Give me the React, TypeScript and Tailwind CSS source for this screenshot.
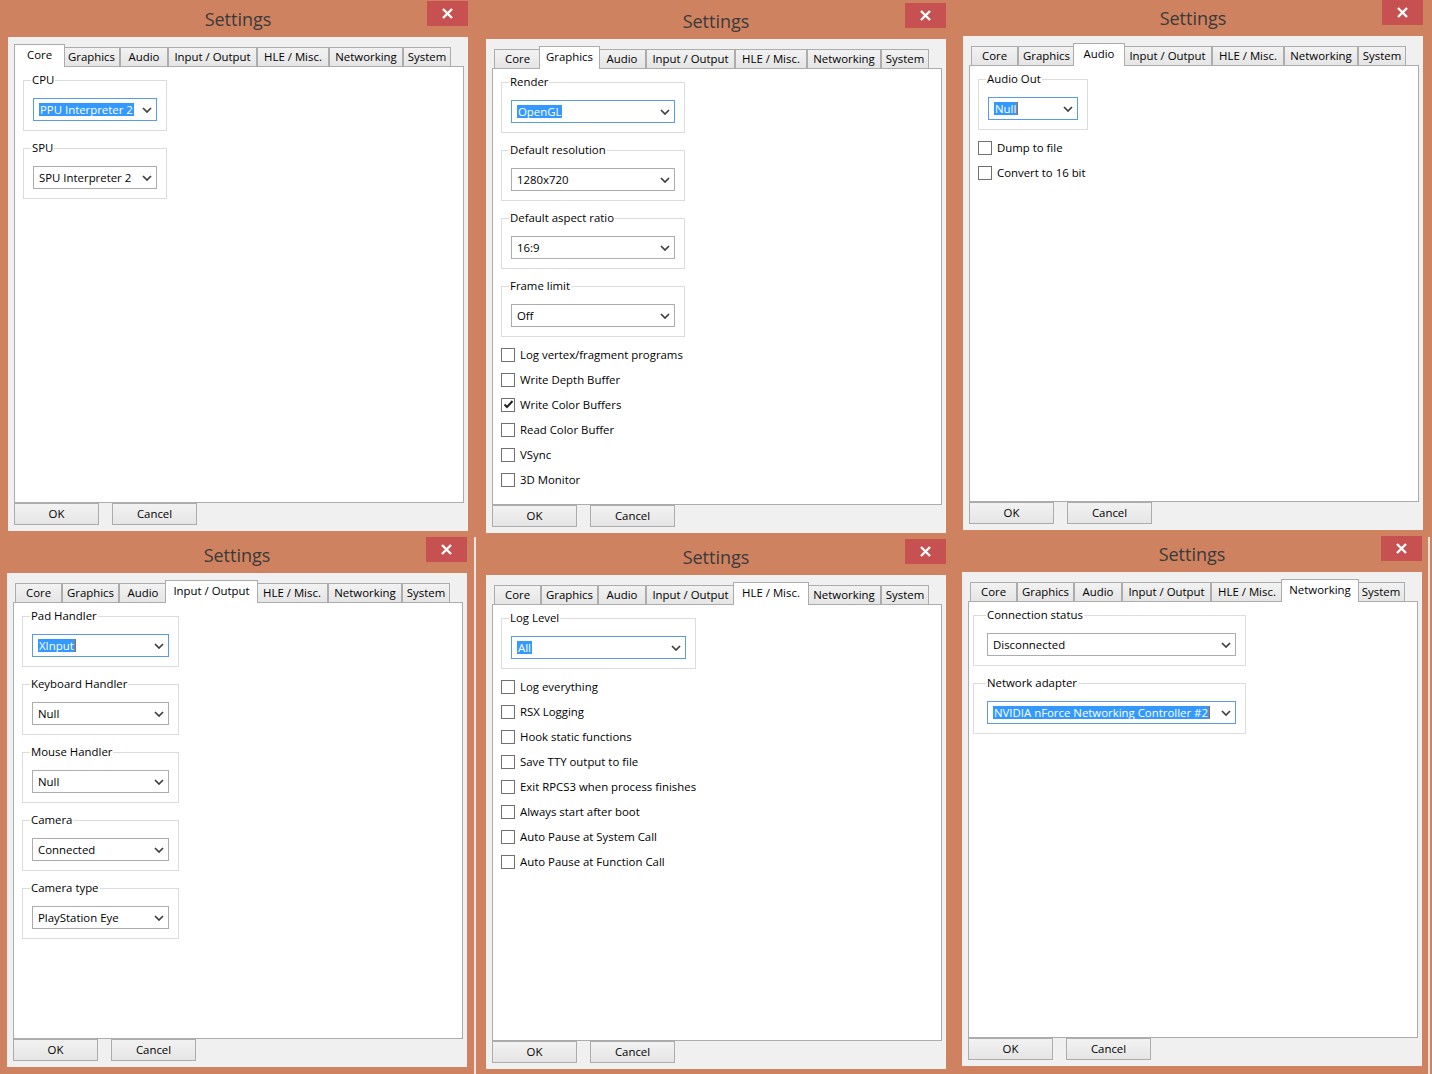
import React from "react";

type TabDef = { label: string; w: string; wa: string };
const TABS: TabDef[] = [
  { label: "Core", w: "w-[47px]", wa: "w-[51px]" },
  { label: "Graphics", w: "w-[57px]", wa: "w-[61px]" },
  { label: "Audio", w: "w-[48px]", wa: "w-[52px]" },
  { label: "Input / Output", w: "w-[89px]", wa: "w-[93px]" },
  { label: "HLE / Misc.", w: "w-[72px]", wa: "w-[76px]" },
  { label: "Networking", w: "w-[74px]", wa: "w-[78px]" },
  { label: "System", w: "w-[48px]", wa: "w-[52px]" },
];

function Chevron() {
  return (
    <svg width="10" height="6" viewBox="0 0 10 6" className="shrink-0">
      <path d="M1 1 L5 5 L9 1" fill="none" stroke="#3f3f3f" strokeWidth="1.7" />
    </svg>
  );
}

function Combo({
  value,
  w,
  focused = false,
  caret = false,
}: {
  value: string;
  w: string;
  focused?: boolean;
  caret?: boolean;
}) {
  return (
    <div
      className={`${w} h-[23px] flex items-center justify-between bg-white border pl-[5px] pr-[4px] ${
        focused ? "border-[#569de5]" : "border-[#acacac]"
      }`}
    >
      {focused ? (
        <span className="flex items-center h-[13px]">
          <span className="bg-[#3399ff] text-white h-[13px] leading-[13px] pl-[1px] pr-[1px] whitespace-nowrap">
            {value}
          </span>
          {caret && <span className="w-px h-[13px] bg-[#b8601e]" />}
        </span>
      ) : (
        <span className="whitespace-nowrap leading-[16px]">{value}</span>
      )}
      <Chevron />
    </div>
  );
}

function Group({
  label,
  w,
  pl = "pl-[9px]",
  lm = "-ml-[2px]",
  children,
}: {
  label: string;
  w: string;
  pl?: string;
  lm?: string;
  children: React.ReactNode;
}) {
  return (
    <fieldset className={`${w} border border-[#dcdcdc] ${pl} pr-[9px] pt-[10px] pb-[9px]`}>
      <legend className={`${lm} px-[1px] leading-[16px]`}>{label}</legend>
      {children}
    </fieldset>
  );
}

function Check({ label, checked = false }: { label: string; checked?: boolean }) {
  return (
    <div className="h-[25px] flex items-center gap-[5px]">
      <span className="w-[14px] h-[14px] border border-[#707070] bg-white flex items-center justify-center shrink-0">
        {checked && (
          <svg width="11" height="11" viewBox="0 0 11 11">
            <path d="M1.5 5.5 L4 8 L9.5 2" fill="none" stroke="#222" strokeWidth="2" />
          </svg>
        )}
      </span>
      <span className="leading-[16px] whitespace-nowrap">{label}</span>
    </div>
  );
}

function TabBar({ active }: { active: number }) {
  return (
    <div className="flex items-end h-[22px] pl-[2px]">
      {TABS.map((t, i) =>
        i === active ? (
          <div
            key={t.label}
            className={`${t.wa} -mx-[2px] h-[23px] -mb-[1px] relative z-10 bg-white border border-b-0 border-[#acacac] flex justify-center pt-[2px] leading-[16px] whitespace-nowrap`}
          >
            {t.label}
          </div>
        ) : (
          <div
            key={t.label}
            className={`${t.w} h-[19px] bg-gradient-to-b from-[#f2f2f2] to-[#e5e5e5] border border-b-0 border-[#acacac] flex items-center justify-center leading-[16px] whitespace-nowrap`}
          >
            {t.label}
          </div>
        )
      )}
    </div>
  );
}

function Btn({ children }: { children: React.ReactNode }) {
  return (
    <div className="w-[85px] h-[22px] bg-gradient-to-b from-[#f2f2f2] to-[#e5e5e5] border border-[#acacac] flex items-center justify-center leading-[16px]">
      {children}
    </div>
  );
}

function Win({
  pos,
  active,
  pane = "pl-[8px]",
  children,
}: {
  pos: string;
  active: number;
  pane?: string;
  children: React.ReactNode;
}) {
  return (
    <div className={`absolute ${pos} w-[476px] h-[539px] bg-[#cf8260]`}>
      <div className="h-[37px] pt-[1px] flex items-center justify-center text-[18px] text-[#3a3a3a] font-['Open_Sans',sans-serif]">
        Settings
      </div>
      <div className="absolute top-[1px] right-[8px] w-[41px] h-[25px] bg-[#c75050] flex items-center justify-center">
        <svg width="11" height="11" viewBox="0 0 11 11">
          <path d="M1 1 L10 10 M10 1 L1 10" stroke="#ffffff" strokeWidth="2.4" />
        </svg>
      </div>
      <div className="ml-[8px] w-[460px] h-[494px] bg-[#f0f0f0] pt-[7px] text-[11.4px] text-black font-['Open_Sans',sans-serif]">
        <div className="ml-[6px] w-[450px]">
          <TabBar active={active} />
          <div className={`h-[437px] bg-white border border-[#acacac] ${pane} pr-[8px] pt-[5px] flex flex-col items-start`}>
            {children}
          </div>
          <div className="flex gap-[13px]">
            <Btn>OK</Btn>
            <Btn>Cancel</Btn>
          </div>
        </div>
      </div>
    </div>
  );
}

export default function App() {
  return (
    <div className="relative w-[1432px] h-[1074px] overflow-hidden bg-[#cf8260]">
      <Win pos="left-[0px] top-[0px]" active={0}>
        <div className="flex flex-col gap-[9px]">
          <Group label="CPU" w="w-[144px]">
            <Combo value="PPU Interpreter 2" w="w-[124px]" focused />
          </Group>
          <Group label="SPU" w="w-[144px]">
            <Combo value="SPU Interpreter 2" w="w-[124px]" />
          </Group>
        </div>
      </Win>

      <Win pos="left-[478px] top-[2px]" active={1}>
        <div className="flex flex-col gap-[9px]">
          <Group label="Render" w="w-[184px]">
            <Combo value="OpenGL" w="w-[164px]" focused />
          </Group>
          <Group label="Default resolution" w="w-[184px]">
            <Combo value="1280x720" w="w-[164px]" />
          </Group>
          <Group label="Default aspect ratio" w="w-[184px]">
            <Combo value="16:9" w="w-[164px]" />
          </Group>
          <Group label="Frame limit" w="w-[184px]">
            <Combo value="Off" w="w-[164px]" />
          </Group>
        </div>
        <div className="mt-[5px] flex flex-col">
          <Check label="Log vertex/fragment programs" />
          <Check label="Write Depth Buffer" />
          <Check label="Write Color Buffers" checked />
          <Check label="Read Color Buffer" />
          <Check label="VSync" />
          <Check label="3D Monitor" />
        </div>
      </Win>

      <Win pos="left-[955px] top-[-1px]" active={2}>
        <Group label="Audio Out" w="w-[110px]">
          <Combo value="Null" w="w-[90px]" focused caret />
        </Group>
        <div className="mt-[5px] flex flex-col">
          <Check label="Dump to file" />
          <Check label="Convert to 16 bit" />
        </div>
      </Win>

      <Win pos="left-[-1px] top-[536px]" active={3}>
        <div className="flex flex-col gap-[9px]">
          <Group label="Pad Handler" w="w-[157px]">
            <Combo value="XInput" w="w-[137px]" focused caret />
          </Group>
          <Group label="Keyboard Handler" w="w-[157px]">
            <Combo value="Null" w="w-[137px]" />
          </Group>
          <Group label="Mouse Handler" w="w-[157px]">
            <Combo value="Null" w="w-[137px]" />
          </Group>
          <Group label="Camera" w="w-[157px]">
            <Combo value="Connected" w="w-[137px]" />
          </Group>
          <Group label="Camera type" w="w-[157px]">
            <Combo value="PlayStation Eye" w="w-[137px]" />
          </Group>
        </div>
      </Win>

      <Win pos="left-[478px] top-[538px]" active={4}>
        <Group label="Log Level" w="w-[194px]">
          <Combo value="All" w="w-[175px]" focused />
        </Group>
        <div className="mt-[5px] flex flex-col">
          <Check label="Log everything" />
          <Check label="RSX Logging" />
          <Check label="Hook static functions" />
          <Check label="Save TTY output to file" />
          <Check label="Exit RPCS3 when process finishes" />
          <Check label="Always start after boot" />
          <Check label="Auto Pause at System Call" />
          <Check label="Auto Pause at Function Call" />
        </div>
      </Win>

      <Win pos="left-[954px] top-[535px]" active={5} pane="pl-[4px]">
        <div className="flex flex-col gap-[9px]">
          <Group label="Connection status" w="w-[273px]" pl="pl-[13px]" lm="-ml-[1px]">
            <Combo value="Disconnected" w="w-[249px]" />
          </Group>
          <Group label="Network adapter" w="w-[273px]" pl="pl-[13px]" lm="-ml-[1px]">
            <Combo value="NVIDIA nForce Networking Controller #2" w="w-[249px]" focused caret />
          </Group>
        </div>
      </Win>

      <div className="absolute left-[474px] top-[537px] w-[2px] h-[537px] bg-[#e9e2df]" />
      <div className="absolute left-[1428px] top-[537px] w-[2px] h-[537px] bg-[#e9e2df]" />
    </div>
  );
}
